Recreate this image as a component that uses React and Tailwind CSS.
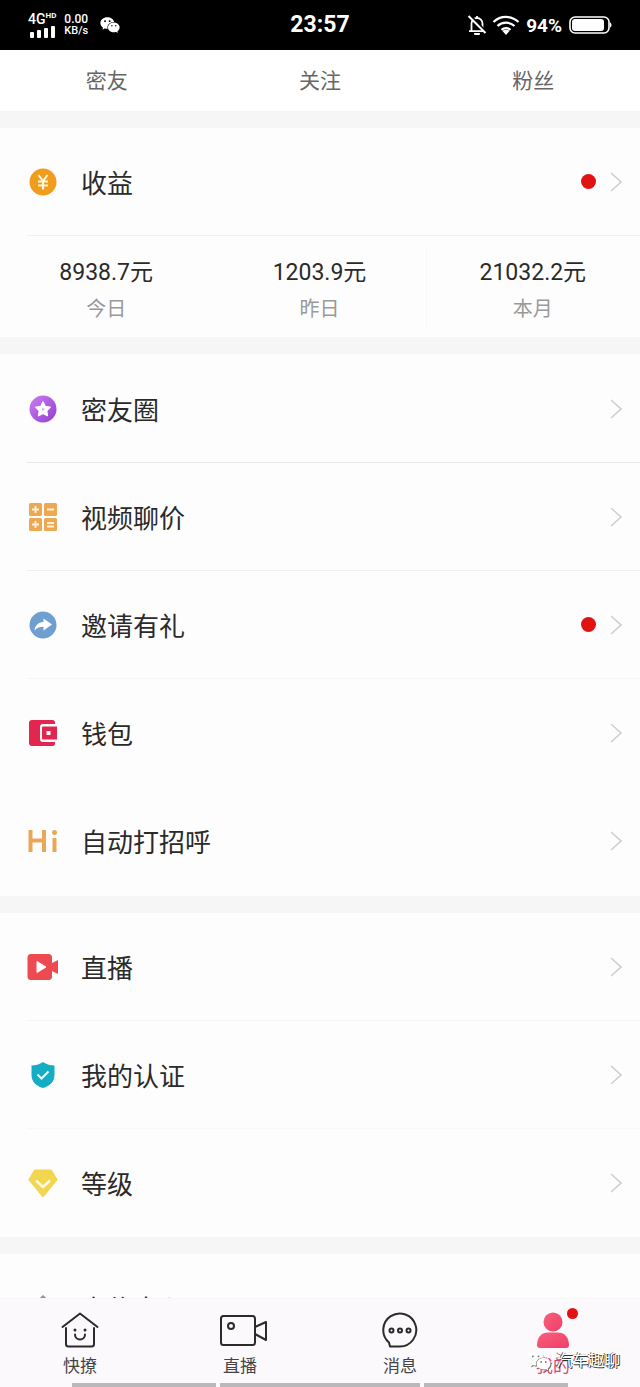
import React, { useState } from "react";
import { AiFillWechat } from "react-icons/ai";
import clsx from "clsx";

/* ---------- menu icons ---------- */

const IncomeIcon = () => (
  <svg viewBox="0 0 28 28" className="h-7 w-7">
    <circle cx="14" cy="14" r="13.5" fill="#f09c1c" />
    <path d="M9.5 7l4.5 6L18.5 7M14 13v8.5M9 13.5h10M9 17.500h10" fill="none" stroke="#fff6dc" strokeWidth="2" />
  </svg>
);

const CircleIcon = () => (
  <svg viewBox="0 0 28 28" className="h-7 w-7">
    <defs>
      <linearGradient id="purple" x1="0" y1="0" x2="1" y2="1">
        <stop offset="0" stopColor="#cf7cf0" />
        <stop offset="1" stopColor="#8f3fd0" />
      </linearGradient>
    </defs>
    <circle cx="14" cy="14" r="13.5" fill="url(#purple)" />
    <path
      d="M14 7l2.2 4.5 4.900.7-3.500 3.500.8 4.900-4.400-2.300-4.400 2.300.8-4.900-3.500-3.500 4.900-.7z"
      fill="#fff"
      stroke="#fff"
      strokeWidth="1.5"
      strokeLinejoin="round"
    />
    <path d="M13 12.500l3 1.800-3 1.800z" fill="#d7b5ee" />
  </svg>
);

const PriceIcon = () => (
  <svg viewBox="0 0 28 28" className="h-7 w-7">
    <g fill="#eda853">
      <rect x="0" y="0" width="13" height="13" rx="1.5" />
      <rect x="15" y="0" width="13" height="13" rx="1.5" />
      <rect x="0" y="15" width="13" height="13" rx="1.5" />
      <rect x="15" y="15" width="13" height="13" rx="1.5" />
    </g>
    <path
      d="M3 6.500h7M6.500 3v7M18 6.500h7M3 21.500h7M6.500 18v7M18 20h7M18 23.500h7"
      stroke="#fff3df"
      strokeWidth="1.8"
    />
  </svg>
);

const InviteIcon = () => (
  <svg viewBox="0 0 28 28" className="h-7 w-7">
    <circle cx="14" cy="14" r="13.5" fill="#6f9fd0" />
    <path d="M14.500 7.500l8.500 6-8.500 6v-3.800c-4 0-6.500 1-9 3.800.6-5 3.500-8 9-8.400z" fill="#fff" />
  </svg>
);

const WalletIcon = () => (
  <svg viewBox="0 0 28 28" className="h-7 w-7">
    <path
      d="M3 1h20.500a2.500 2.500 0 0 1 2.500 2.500V5H14a3 3 0 0 0-3 3v12a3 3 0 0 0 3 3h12v1.500a2.500 2.500 0 0 1-2.500 2.500H3a3 3 0 0 1-3-3V4a3 3 0 0 1 3-3z"
      fill="#e3264f"
    />
    <path fillRule="evenodd" d="M14 7.500H28v13H14a1 1 0 0 1-1-1v-11a1 1 0 0 1 1-1zM17.500 12v4h4V12z" fill="#e3264f" />
  </svg>
);

const HiIcon = () => (
  <svg viewBox="0 0 30 28" className="h-7 w-[30px]">
    <path d="M2.500 3v22M16 3v22M2.500 13.500H16M26.500 11v14" fill="none" stroke="#eaa758" strokeWidth="4" />
    <circle cx="26.5" cy="5.5" r="2.5" fill="#eaa758" />
  </svg>
);

const LiveIcon = () => (
  <svg viewBox="0 0 32 28" className="h-7 w-8">
    <path
      d="M4 1h17.500a3.500 3.500 0 0 1 3.500 3.500V10l6-3v14l-6-3v5.500a3.500 3.500 0 0 1-3.500 3.500H4a3.500 3.500 0 0 1-3.500-3.500v-19A3.500 3.500 0 0 1 4 1z"
      fill="#ee4b50"
    />
    <path d="M10 8.500l9 5.500-9 5.500z" fill="#fff" stroke="#fff" strokeLinejoin="round" />
  </svg>
);

const CertIcon = () => (
  <svg viewBox="0 0 28 28" className="h-7 w-7">
    <path d="M14 1c3.500 2.500 7.500 3.500 11.500 3.500V14c0 6.500-4.500 11-11.500 13C7 25 2.500 20.500 2.500 14V4.500C6.500 4.500 10.500 3.500 14 1z" fill="#14adc4" />
    <path d="M8.500 13.500l4 4 7-7" fill="none" stroke="#dffcff" strokeWidth="2" />
  </svg>
);

const LevelIcon = () => (
  <svg viewBox="0 0 30 28" className="h-7 w-[30px]">
    <path d="M7 1.500h16L28.500 10.500 15 27 1.500 10.500z" fill="#f2d64f" stroke="#f2d64f" strokeWidth="2" strokeLinejoin="round" />
    <path d="M8 11.500l7 6.500 7-6.500" fill="none" stroke="#fffbe6" strokeWidth="2.4" />
  </svg>
);

const PromoIcon = () => (
  <svg viewBox="0 0 28 28" className="h-7 w-7">
    <path d="M14 1l12 11v14H2V12z" fill="#a58a90" />
  </svg>
);

const Chevron = () => (
  <svg viewBox="0 0 12 20" className="h-5 w-3" fill="none" stroke="#cfcfcf" strokeWidth="1.6">
    <path d="M1 1l10 9-10 9" />
  </svg>
);

/* ---------- bottom bar icons ---------- */

const HomeIcon = () => (
  <svg viewBox="0 0 38 36" className="h-9 w-[38px]" fill="none" stroke="#2b2b2b" strokeWidth="2" strokeLinecap="round" strokeLinejoin="round">
    <path d="M1.500 15L19 1.500 36.500 15" />
    <path d="M5 16v16a2.500 2.500 0 0 0 2.500 2.500h23a2.500 2.500 0 0 0 2.500-2.500V16" />
    <path d="M14 22.500a5 5 0 0 0 10 0" />
    <g fill="#2b2b2b" stroke="none">
      <circle cx="14" cy="18" r="1.5" />
      <circle cx="24" cy="18" r="1.5" />
    </g>
  </svg>
);

const VideoIcon = () => (
  <svg viewBox="0 0 48 36" className="h-9 w-12" fill="none" stroke="#2b2b2b" strokeWidth="2" strokeLinejoin="round">
    <rect x="1" y="4" width="34" height="29" rx="2.5" />
    <path d="M35 15l11-5v18L35 22" />
    <circle cx="11" cy="14" r="3" />
  </svg>
);

const MessageIcon = () => (
  <svg viewBox="0 0 36 36" className="h-9 w-9" fill="none" stroke="#2b2b2b" strokeWidth="2" strokeLinejoin="round">
    <path d="M8 34.500h10A16.500 16.500 0 1 0 7 30.500z" />
    <g strokeWidth="2">
      <circle cx="9.5" cy="18.5" r="2" />
      <circle cx="18" cy="18.5" r="2" />
      <circle cx="26.5" cy="18.5" r="2" />
    </g>
  </svg>
);

const MineIcon = () => (
  <svg viewBox="0 0 34 36" className="h-9 w-[34px]">
    <defs>
      <linearGradient id="pink" x1="0" y1="0" x2="1" y2="1">
        <stop offset="0" stopColor="#fb5f7c" />
        <stop offset="1" stopColor="#ee3f68" />
      </linearGradient>
    </defs>
    <circle cx="17" cy="10" r="9.5" fill="url(#pink)" />
    <path d="M1 33c0-8 5-12.500 11-12.500h10c6 0 11 4.500 11 12.500a3 3 0 0 1-3 3H4a3 3 0 0 1-3-3z" fill="url(#pink)" />
  </svg>
);

const tabs = ["密友", "关注", "粉丝"];

const income = [
  { label: "今日", value: "8938.7元" },
  { label: "昨日", value: "1203.9元" },
  { label: "本月", value: "21032.2元" },
];

const mainMenu = [
  { title: "密友圈", icon: <CircleIcon />, line: "border-[#e6e5e8]" },
  { title: "视频聊价", icon: <PriceIcon />, line: "border-[#f0f0f0]" },
  { title: "邀请有礼", icon: <InviteIcon />, dot: true, line: "border-[#f6f5f8]" },
  { title: "钱包", icon: <WalletIcon /> },
  { title: "自动打招呼", icon: <HiIcon /> },
];

const moreMenu = [
  { title: "直播", icon: <LiveIcon />, line: "border-[#f4f4f5]" },
  { title: "我的认证", icon: <CertIcon />, line: "border-[#f8f8f9]" },
  { title: "等级", icon: <LevelIcon /> },
];

const navItems = [
  { title: "快撩", icon: <HomeIcon /> },
  { title: "直播", icon: <VideoIcon />, iconClass: "pl-2" },
  { title: "消息", icon: <MessageIcon /> },
  { title: "我的", icon: <MineIcon />, dot: true, itemClass: "pr-[14px]" },
];

const MenuRow = ({ title, icon, dot, line }) => (
  <a href="#" className="block pl-[27px]">
    <div className={clsx("flex h-[108px] items-center border-b pr-[18px]", line || "border-transparent")}>
      <span className="flex w-8 justify-center">{icon}</span>
      <span className="ml-[22px] flex-1 pt-1 text-[26px] leading-8 text-[#2a2a2a]">{title}</span>
      {dot && <span className="mr-[14px] h-[15px] w-[15px] rounded-full bg-[#e01212]" />}
      <Chevron />
    </div>
  </a>
);

const StatusBar = () => (
  <header className="grid h-[50px] shrink-0 grid-cols-3 items-center bg-black px-7 text-white">
    <div className="flex items-center">
      <div className="flex flex-col">
        <div className="flex items-start font-medium">
          <span className="text-[14px] leading-[14px]">4G</span>
          <span className="text-[8px] leading-2 font-bold">HD</span>
        </div>
        <svg viewBox="0 0 28 12" className="h-3 w-7" fill="#fff">
          <rect x="2" y="6" width="4" height="6" rx="1" />
          <rect x="9" y="4" width="4" height="8" rx="1" />
          <rect x="16" y="2" width="4" height="10" rx="1" />
          <rect x="23" y="0" width="4" height="12" rx="1" />
        </svg>
      </div>
      <div className="ml-2 flex flex-col text-[12px] leading-3 font-medium">
        <span>0.00</span>
        <span className="text-[11px]">KB/s</span>
      </div>
      <AiFillWechat className="ml-[11px] h-[22px] w-[22px]" />
    </div>
    <div className="text-center text-[23px] leading-7 font-bold">23:57</div>
    <div className="flex items-center justify-end">
      <svg viewBox="0 0 20 20" className="h-5 w-5" fill="none" stroke="#fff" strokeWidth="1.8">
        <path d="M4.500 16V8.500a5.500 5.500 0 0 1 11 0V16M2 16.200h16M10 1v2" />
        <path d="M7 18a3 3 0 0 0 6 0z" fill="#fff" stroke="none" />
        <path d="M3 0l16 16.500" stroke="#000" strokeWidth="2" />
        <path d="M1.500 1L18.500 18" strokeWidth="2" />
      </svg>
      <svg viewBox="0 0 28 20" className="ml-[5px] h-5 w-7" fill="none" stroke="#fff" strokeWidth="2.3">
        <path d="M1.500 7a18 18 0 0 1 25 0M5.500 11a12.500 12.500 0 0 1 17 0M9.500 14.800a7 7 0 0 1 9 0" />
        <path d="M14 20l-3.500-4a5 5 0 0 1 7 0z" fill="#fff" stroke="none" />
      </svg>
      <span className="ml-[6px] pt-[2px] text-[19px] leading-6 font-bold">94%</span>
      <svg viewBox="0 0 43 18" className="ml-[7px] h-[18px] w-[43px]">
        <rect x="1" y="1" width="39" height="16" rx="5" fill="none" stroke="#fff" strokeWidth="1.6" />
        <rect x="3" y="3" width="32" height="12" rx="3" fill="#fff" />
        <path d="M41 6.500c2 .5 2 4.500 0 5z" fill="#fff" />
      </svg>
    </div>
  </header>
);

const App = () => {
  const [active, setActive] = useState("我的");

  return (
    <div className="flex h-screen flex-col bg-[#fdfcfd] font-[Roboto,'Noto_Sans_CJK_SC',sans-serif]">
      <StatusBar />

      <main className="min-h-0 flex-1 overflow-y-auto bg-[#f6f6f6] [scrollbar-width:none]">
        <div className="flex flex-col gap-[17px]">
          {/* Friends / following / fans */}
          <div className="grid h-[61px] grid-cols-3 bg-white">
            {tabs.map((tab) => (
              <button key={tab} className="text-[21px] leading-7 text-[#666]">
                {tab}
              </button>
            ))}
          </div>

          {/* Income */}
          <section className="bg-[#fefdfe]">
            <MenuRow title="收益" icon={<IncomeIcon />} dot line="border-[#f1f1f1]" />
            <dl className="grid h-[101px] grid-cols-3 items-center">
              {income.map((item, i) => (
                <div
                  key={item.label}
                  className={clsx(
                    "flex flex-col-reverse items-center border-r pt-2",
                    i === 1 ? "border-[#f8f7f8]" : "border-transparent"
                  )}
                >
                  <dt className="text-[20px] leading-9 text-[#999]">{item.label}</dt>
                  <dd className="text-[23px] leading-9 text-[#2a2a2a]">{item.value}</dd>
                </div>
              ))}
            </dl>
          </section>

          <section className="bg-[#fefdfe] py-px">
            {mainMenu.map((item) => (
              <MenuRow key={item.title} {...item} />
            ))}
          </section>

          <section className="bg-[#fefdfe]">
            {moreMenu.map((item) => (
              <MenuRow key={item.title} {...item} />
            ))}
          </section>

          <section className="bg-[#fefdfe]">
            <MenuRow title="宣传中心" icon={<PromoIcon />} />
          </section>
        </div>
      </main>

      <footer className="relative flex h-[89px] shrink-0 flex-col border-t border-[#f6f5f6] bg-[#fbf9fb]">
        <nav className="grid flex-1 grid-cols-4">
          {navItems.map((item) => (
            <button
              key={item.title}
              onClick={() => setActive(item.title)}
              className={clsx("flex flex-col items-center pt-[13px]", item.itemClass)}
            >
              <span className={clsx("relative", item.iconClass)}>
                {item.icon}
                {item.dot && <span className="absolute -top-1 -right-2 h-[11px] w-[11px] rounded-full bg-[#e01212]" />}
              </span>
              <span
                className={clsx(
                  "mt-1 text-[17px] leading-7",
                  active === item.title ? "text-[#d4467c]" : "text-[#444]"
                )}
              >
                {item.title}
              </span>
            </button>
          ))}
        </nav>

        <div className="flex h-1 gap-1 px-[72px]">
          <span className="flex-[18] bg-[#b9b9b9]" />
          <span className="flex-[25] bg-[#b9b9b9]" />
          <span className="flex-[18] bg-[#b9b9b9]" />
        </div>

        {/* Account watermark */}
        <div className="pointer-events-none absolute right-5 bottom-3 flex items-center gap-1 text-white">
          <AiFillWechat className="h-[26px] w-[26px] drop-shadow-[1px_1px_0px_#777]" />
          <span className="text-[16px] leading-7 [text-shadow:1px_1px_0_#333,-1px_0_0_#555]">汽车趣聊</span>
        </div>
      </footer>
    </div>
  );
};

export default App;
